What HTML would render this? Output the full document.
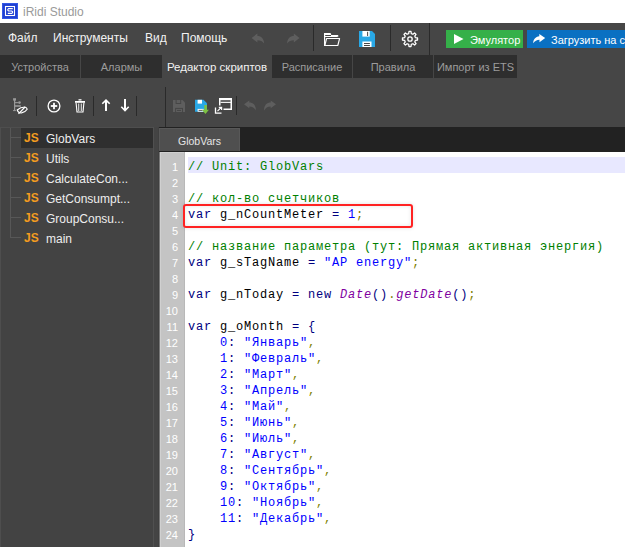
<!DOCTYPE html>
<html><head><meta charset="utf-8">
<style>
*{margin:0;padding:0;box-sizing:border-box}
html,body{width:625px;height:547px;overflow:hidden;background:#464646;font-family:"Liberation Sans",sans-serif;font-size:12px}
.a{position:absolute}
#title{left:0;top:0;width:625px;height:23px;background:#fff}
#title .t{left:23px;top:5px;color:#9a9a9a;font-size:12px;white-space:nowrap}
#menubar{left:0;top:23px;width:625px;height:32px;background:#464646}
.mi{top:8px;color:#f2f2f2;font-size:12px;white-space:nowrap}
.sep{width:1px;background:#2a2a2a}
#tabs{left:0;top:55px;width:625px;height:23px;background:#464646}
.tab{top:0;height:23px;background:#2e2e2e;color:#9c9c9c;text-align:center;line-height:25px;font-size:11px;white-space:nowrap}
.tab.on{background:#464646;color:#f2f2f2;font-size:11.5px}
.tsep{top:0;height:23px;width:1px;background:#222}
#toolbar{left:0;top:78px;width:625px;height:49px;background:#464646}
#left{left:0;top:127px;width:153px;height:420px;background:#434343}
#left .frame{left:0;top:0;width:153px;height:420px;border-left:1px solid #4e4e4e;border-top:1px solid #4e4e4e}
.row{left:21px;height:20px;width:132px;color:#eeeeee;font-size:12px;line-height:20px;white-space:nowrap}
.row.sel{background:#2f2f2f}
.js{position:absolute;left:3px;top:0;color:#f39c1f;font-weight:bold;font-size:12px}
.nm{position:absolute;left:25px;top:1px}
.tl{background:#575757}
#splitter{left:153px;top:127px;width:6px;height:420px;background:#444444;border-left:1px solid #505050;border-right:1px solid #404040}
#etabs{left:159px;top:127px;width:466px;height:25px;background:#222222}
#etab{left:0;top:1px;width:81px;height:23px;background:#4f4f4f;border:1px solid #585858;border-bottom:0;color:#e6e6e6;text-align:center;line-height:24px;font-size:10.5px}
#gutter{left:159px;top:152px;width:25px;height:395px;background:#c4c4c4;border-left:1px solid #777;box-shadow:inset 1px 1px 0 #d0d0d0}
#edframe{left:160px;top:153px;width:1px;height:394px;background:#cfcfcf}
#code{left:184px;top:152px;width:441px;height:395px;background:#fff;border-left:1px solid #b8b8b8}
.ln{position:absolute;right:6px;width:22px;text-align:right;color:#ffffff;font-size:11px;line-height:16px;height:16px;margin-top:2px}
 .cl{position:absolute;left:3px;right:0;margin-top:2px;height:16px;line-height:16px;font-family:"Liberation Mono",monospace;font-size:12px;letter-spacing:0.8px;white-space:pre;color:#000}
.hl{background:#e8e8ff;margin-top:0;padding-top:2px;height:16px}
.c{color:#008000}.k{color:#000080}.s{color:#0000ff}.n{color:#0000ff}.p{color:#808000}.o{color:#000080}.f{color:#8000a0;font-style:italic}
#redbox{left:183px;top:204px;width:230px;height:24px;border:2px solid #ff2222;border-radius:3px;box-shadow:0 0 4px rgba(0,0,0,0.12),inset 0 0 4px rgba(0,0,0,0.10)}
</style></head>
<body>
<div id="title" class="a">
  <svg class="a" style="left:2px;top:3px" width="16" height="16" viewBox="0 0 16 16"><rect x="0" y="0" width="16" height="16" fill="#3358e6"/><rect x="1" y="1" width="14" height="14" fill="#1f3fd2"/><rect x="3.5" y="3.5" width="9" height="9" fill="none" stroke="#fff" stroke-width="1.1"/><path d="M10.8 5.6 L6.6 5.6 L5.8 6.4 L5.8 7.2 L6.6 8 L9.8 8 L10.6 8.8 L10.6 9.6 L9.8 10.4 L5.8 10.4" fill="none" stroke="#fff" stroke-width="1.1"/></svg>
  <div class="a t">iRidi Studio</div>
</div>
<div id="menubar" class="a">
  <div class="a mi" style="left:8px">Файл</div>
  <div class="a mi" style="left:53px">Инструменты</div>
  <div class="a mi" style="left:145px">Вид</div>
  <div class="a mi" style="left:181px">Помощь</div>

  <svg class="a" style="left:250px;top:9px" width="18" height="14" viewBox="0 0 18 14"><path d="M1.6 5.9 L7.4 1.6 L7.4 4.1 C11.2 4.1 13.9 6.6 14.1 11.6 C12.3 9.1 10.5 8.3 7.4 8.3 L7.4 10.5 Z" fill="#5e5e5e"/></svg>
  <svg class="a" style="left:284px;top:9px" width="18" height="14" viewBox="0 0 18 14"><path d="M15.5 5.9 L9.8 1.6 L9.8 4.1 C6 4.1 3.3 6.6 3.1 11.6 C4.9 9.1 6.7 8.3 9.8 8.3 L9.8 10.5 Z" fill="#5e5e5e"/></svg>
  <div class="a sep" style="left:313px;top:2px;height:26px"></div>
  <svg class="a" style="left:323px;top:9px" width="18" height="15" viewBox="0 0 18 15"><path d="M1 2 Q1 1 2 1 L7.6 1 L8.3 3 L1 3 Z" fill="#fff"/><rect x="8" y="3" width="7" height="1" fill="#fff"/><rect x="2" y="4" width="12" height="1" fill="#fff"/><rect x="14.2" y="3" width="1" height="2" fill="#fff"/><rect x="1" y="1" width="1.2" height="13" fill="#fff"/><path d="M1.8 13.5 L3.6 6.5 L16.6 6.5 L14.8 13.5 Z" fill="none" stroke="#fff" stroke-width="1.1" stroke-linejoin="round"/></svg>
  <svg class="a" style="left:359px;top:8px" width="16" height="16" viewBox="0 0 16 16"><path d="M0 0 L13 0 L16 3 L16 16 L0 16 Z" fill="#29a8e6"/><rect x="3.4" y="0" width="7.3" height="5.6" fill="#fff"/><rect x="8.2" y="0.8" width="0.9" height="4.2" fill="#333"/><rect x="3.4" y="10.5" width="9.1" height="5.5" fill="#fff"/><rect x="5" y="12.1" width="5.9" height="0.9" fill="#333"/><rect x="5" y="14.1" width="5.9" height="0.9" fill="#333"/></svg>
  <div class="a sep" style="left:390px;top:2px;height:26px"></div>
  <svg class="a" style="left:401px;top:7px" width="18" height="18" viewBox="0 0 18 18"><path d="M16.53 7.99 L16.53 10.01 L14.45 10.31 L13.77 11.93 L15.04 13.61 L13.61 15.04 L11.93 13.77 L10.31 14.45 L10.01 16.53 L7.99 16.53 L7.69 14.45 L6.07 13.77 L4.39 15.04 L2.96 13.61 L4.23 11.93 L3.55 10.31 L1.47 10.01 L1.47 7.99 L3.55 7.69 L4.23 6.07 L2.96 4.39 L4.39 2.96 L6.07 4.23 L7.69 3.55 L7.99 1.47 L10.01 1.47 L10.31 3.55 L11.93 4.23 L13.61 2.96 L15.04 4.39 L13.77 6.07 L14.45 7.69 Z" stroke-linejoin="round" fill="none" stroke="#fff" stroke-width="1.3"/><circle cx="9" cy="9" r="2.2" fill="none" stroke="#fff" stroke-width="1.3"/></svg>
  <div class="a sep" style="left:429px;top:0px;height:32px"></div>
  <div class="a" style="left:446px;top:7px;width:77px;height:18px;background:#35b049"></div>
  <svg class="a" style="left:453px;top:10px" width="11" height="12" viewBox="0 0 11 12"><path d="M1 1 L10.5 6 L1 11 Z" fill="#fff"/></svg>
  <div class="a" style="left:470px;top:11px;color:#fff;font-size:11px;white-space:nowrap">Эмулятор</div>
  <div class="a" style="left:527px;top:7px;width:98px;height:18px;background:#0a70c2"></div>
  <svg class="a" style="left:532px;top:11px" width="14" height="11" viewBox="0 0 14 11"><path d="M13.2 4 L7.3 0 L7.3 2.3 C3.5 2.8 1.3 5.5 1.2 9.2 C2.8 7 4.8 5.8 7.5 5.8 L7.5 8.2 Z" fill="#fff"/></svg>
  <div class="a" style="left:551px;top:11px;color:#fff;font-size:11px;white-space:nowrap">Загрузить на сервер</div>
</div>
<div id="tabs" class="a">
  <div class="a tab" style="left:0;width:80px">Устройства</div>
  <div class="a tab" style="left:81px;width:81px">Алармы</div>
  <div class="a tab on" style="left:162px;width:110px">Редактор скриптов</div>
  <div class="a tab" style="left:272px;width:80px">Расписание</div>
  <div class="a tab" style="left:353px;width:80px">Правила</div>
  <div class="a tab" style="left:434px;width:83px">Импорт из ETS</div>
</div>
<div id="toolbar" class="a">
  <svg class="a" style="left:12px;top:19px" width="17" height="18" viewBox="0 0 17 18"><rect x="1.1" y="1.2" width="2.9" height="2.4" fill="#9a9a9a"/><rect x="2" y="3" width="1.2" height="11" fill="#9a9a9a"/><rect x="3" y="5.1" width="3.6" height="1.1" fill="#9a9a9a"/><circle cx="7.5" cy="5.6" r="1.3" fill="#9a9a9a"/><rect x="3" y="8.2" width="5.8" height="1.6" fill="#9a9a9a"/><rect x="1.1" y="13" width="2.7" height="1.1" fill="#9a9a9a"/><path d="M5.2 13 Q8.5 10 12.9 10 Q14.8 10.6 15.2 12.2 Q13.5 15 9.5 15.9 Q6.5 16.3 5.2 13 Z" fill="none" stroke="#fff" stroke-width="1.1"/><path d="M6.5 16.9 L13 10" stroke="#fff" stroke-width="1.2"/></svg>
  <div class="a sep" style="left:36px;top:18px;height:20px"></div>
  <svg class="a" style="left:47px;top:21px" width="14" height="14" viewBox="0 0 14 14"><circle cx="7" cy="7" r="5.9" fill="none" stroke="#fff" stroke-width="1.3"/><rect x="3.8" y="6.1" width="6.4" height="1.8" fill="#fff"/><rect x="6.1" y="3.8" width="1.8" height="6.4" fill="#fff"/></svg>
  <svg class="a" style="left:74px;top:20px" width="12" height="15" viewBox="0 0 12 15"><rect x="4.5" y="1.2" width="3" height="1.3" fill="#fff"/><rect x="1" y="3" width="10" height="1.8" fill="#fff"/><path d="M2.1 5 L3 14 L9 14 L9.9 5" fill="none" stroke="#fff" stroke-width="1.1"/><rect x="4.3" y="5.5" width="0.9" height="7.5" fill="#fff"/><rect x="6.8" y="5.5" width="0.9" height="7.5" fill="#fff"/></svg>
  <div class="a sep" style="left:93px;top:18px;height:20px"></div>
  <svg class="a" style="left:101px;top:20px" width="10" height="14" viewBox="0 0 10 14"><path d="M1.3 5.8 L5 2.1 L8.7 5.8" fill="none" stroke="#fff" stroke-width="1.6"/><rect x="4" y="2.5" width="2" height="10.5" fill="#fff"/></svg>
  <svg class="a" style="left:120px;top:20px" width="10" height="14" viewBox="0 0 10 14"><path d="M1.3 8.8 L5 12.5 L8.7 8.8" fill="none" stroke="#fff" stroke-width="1.6"/><rect x="4" y="1" width="2" height="11" fill="#fff"/></svg>
  <div class="a sep" style="left:136px;top:18px;height:20px"></div>
  <div class="a sep" style="left:165px;top:9px;height:40px"></div>
  <svg class="a" style="left:173px;top:22px" width="12" height="13" viewBox="0 0 12 13"><path d="M0 0 L9.5 0 L12 2.5 L12 12.1 L0 12.1 Z" fill="#5e5e5e"/><rect x="2.6" y="0" width="5.6" height="4" fill="#464646"/><rect x="3.6" y="0" width="3.6" height="3" fill="#5e5e5e"/><rect x="2.1" y="7.9" width="7.9" height="4.2" fill="#464646"/><rect x="3.1" y="8.9" width="5.9" height="3.2" fill="#5e5e5e"/><rect x="4" y="9.9" width="4" height="1.1" fill="#464646"/></svg>
  <svg class="a" style="left:195px;top:21px" width="15" height="16" viewBox="0 0 15 16"><path d="M0 0.8 L8.5 0.8 L12 4.2 L12 12.7 L0 12.7 Z" fill="#29a8e6"/><rect x="2.6" y="0.8" width="4.4" height="3.8" fill="#fff"/><rect x="2.6" y="9.9" width="6" height="2.8" fill="#fff"/><rect x="3.6" y="10.9" width="4" height="0.8" fill="#333"/><rect x="9.3" y="6" width="2.6" height="5" fill="#7dc142"/><path d="M7 10.7 L13.9 10.7 L10.45 14.9 Z" fill="#7dc142"/></svg>
  <svg class="a" style="left:214px;top:19px" width="19" height="18" viewBox="0 0 19 18"><rect x="5" y="1" width="13" height="2.2" fill="#fff"/><rect x="6.5" y="4.8" width="10.5" height="1.1" fill="#fff"/><rect x="5" y="1" width="1.5" height="7.5" fill="#fff"/><rect x="16.5" y="1" width="1.5" height="12" fill="#fff"/><rect x="9.5" y="11.5" width="8.5" height="1.5" fill="#fff"/><path d="M1.5 10.5 L1.5 16.2 L7.5 16.2" fill="none" stroke="#fff" stroke-width="1.3"/><path d="M3.5 14.2 L7.5 10.2 M4.8 10.3 L7.6 10.3 L7.6 13" fill="none" stroke="#fff" stroke-width="1.2"/></svg>
  <div class="a sep" style="left:236px;top:18px;height:19px"></div>
  <svg class="a" style="left:243px;top:22px" width="14" height="11" viewBox="0 0 14 11"><path d="M1 4.2 L6.3 0.5 L6.3 2.6 C10 2.6 12.8 4.8 13 10.5 C11.2 7.5 9.5 6.4 6.3 6.4 L6.3 8.2 Z" fill="#5e5e5e"/></svg>
  <svg class="a" style="left:263px;top:22px" width="14" height="11" viewBox="0 0 14 11"><path d="M13 4.2 L7.7 0.5 L7.7 2.6 C4 2.6 1.2 4.8 1 10.5 C2.8 7.5 4.5 6.4 7.7 6.4 L7.7 8.2 Z" fill="#5e5e5e"/></svg>
</div>
<div id="left" class="a">
  <div class="a frame"></div>
  <div class="a tl" style="left:10px;top:1px;width:1px;height:110px"></div>
  <div class="a tl" style="left:11px;top:10px;width:10px;height:1px"></div>
  <div class="a tl" style="left:11px;top:30px;width:10px;height:1px"></div>
  <div class="a tl" style="left:11px;top:50px;width:10px;height:1px"></div>
  <div class="a tl" style="left:11px;top:70px;width:10px;height:1px"></div>
  <div class="a tl" style="left:11px;top:90px;width:10px;height:1px"></div>
  <div class="a tl" style="left:11px;top:110px;width:10px;height:1px"></div>
  <div class="a row sel" style="top:1px"><span class="js">JS</span><span class="nm">GlobVars</span></div>
  <div class="a row" style="top:21px"><span class="js">JS</span><span class="nm">Utils</span></div>
  <div class="a row" style="top:41px"><span class="js">JS</span><span class="nm">CalculateCon...</span></div>
  <div class="a row" style="top:61px"><span class="js">JS</span><span class="nm">GetConsumpt...</span></div>
  <div class="a row" style="top:81px"><span class="js">JS</span><span class="nm">GroupConsu...</span></div>
  <div class="a row" style="top:101px"><span class="js">JS</span><span class="nm">main</span></div>
</div>
<div id="splitter" class="a"></div>
<div id="etabs" class="a"><div id="etab" class="a">GlobVars</div></div>
<div id="gutter" class="a">
<div class="ln" style="top:5px">1</div>
<div class="ln" style="top:21px">2</div>
<div class="ln" style="top:37px">3</div>
<div class="ln" style="top:53px">4</div>
<div class="ln" style="top:69px">5</div>
<div class="ln" style="top:85px">6</div>
<div class="ln" style="top:101px">7</div>
<div class="ln" style="top:117px">8</div>
<div class="ln" style="top:133px">9</div>
<div class="ln" style="top:149px">10</div>
<div class="ln" style="top:165px">11</div>
<div class="ln" style="top:181px">12</div>
<div class="ln" style="top:197px">13</div>
<div class="ln" style="top:213px">14</div>
<div class="ln" style="top:229px">15</div>
<div class="ln" style="top:245px">16</div>
<div class="ln" style="top:261px">17</div>
<div class="ln" style="top:277px">18</div>
<div class="ln" style="top:293px">19</div>
<div class="ln" style="top:309px">20</div>
<div class="ln" style="top:325px">21</div>
<div class="ln" style="top:341px">22</div>
<div class="ln" style="top:357px">23</div>
<div class="ln" style="top:373px">24</div>
</div>
<div id="code" class="a">
<div class="cl hl" style="top:5px"><span class="c">// Unit: GlobVars</span></div>
<div class="cl" style="top:21px"></div>
<div class="cl" style="top:37px"><span class="c">// кол-во счетчиков</span></div>
<div class="cl" style="top:53px"><span class="k">var</span> g_nCountMeter <span class="o">=</span> <span class="n">1</span><span class="p">;</span></div>
<div class="cl" style="top:69px"></div>
<div class="cl" style="top:85px"><span class="c">// название параметра (тут: Прямая активная энергия)</span></div>
<div class="cl" style="top:101px"><span class="k">var</span> g_sTagName <span class="o">=</span> <span class="s">"AP energy"</span><span class="p">;</span></div>
<div class="cl" style="top:117px"></div>
<div class="cl" style="top:133px"><span class="k">var</span> g_nToday <span class="o">=</span> <span class="k">new</span> <span class="f">Date</span><span class="o">()</span><span class="p">.</span><span class="f">getDate</span><span class="o">()</span><span class="p">;</span></div>
<div class="cl" style="top:149px"></div>
<div class="cl" style="top:165px"><span class="k">var</span> g_oMonth <span class="o">=</span> <span class="o">{</span></div>
<div class="cl" style="top:181px">    <span class="n">0</span><span class="o">:</span> <span class="s">"Январь"</span><span class="p">,</span></div>
<div class="cl" style="top:197px">    <span class="n">1</span><span class="o">:</span> <span class="s">"Февраль"</span><span class="p">,</span></div>
<div class="cl" style="top:213px">    <span class="n">2</span><span class="o">:</span> <span class="s">"Март"</span><span class="p">,</span></div>
<div class="cl" style="top:229px">    <span class="n">3</span><span class="o">:</span> <span class="s">"Апрель"</span><span class="p">,</span></div>
<div class="cl" style="top:245px">    <span class="n">4</span><span class="o">:</span> <span class="s">"Май"</span><span class="p">,</span></div>
<div class="cl" style="top:261px">    <span class="n">5</span><span class="o">:</span> <span class="s">"Июнь"</span><span class="p">,</span></div>
<div class="cl" style="top:277px">    <span class="n">6</span><span class="o">:</span> <span class="s">"Июль"</span><span class="p">,</span></div>
<div class="cl" style="top:293px">    <span class="n">7</span><span class="o">:</span> <span class="s">"Август"</span><span class="p">,</span></div>
<div class="cl" style="top:309px">    <span class="n">8</span><span class="o">:</span> <span class="s">"Сентябрь"</span><span class="p">,</span></div>
<div class="cl" style="top:325px">    <span class="n">9</span><span class="o">:</span> <span class="s">"Октябрь"</span><span class="p">,</span></div>
<div class="cl" style="top:341px">    <span class="n">10</span><span class="o">:</span> <span class="s">"Ноябрь"</span><span class="p">,</span></div>
<div class="cl" style="top:357px">    <span class="n">11</span><span class="o">:</span> <span class="s">"Декабрь"</span><span class="p">,</span></div>
<div class="cl" style="top:373px"><span class="o">}</span></div>
</div>
<div id="redbox" class="a"></div>
</body></html>
